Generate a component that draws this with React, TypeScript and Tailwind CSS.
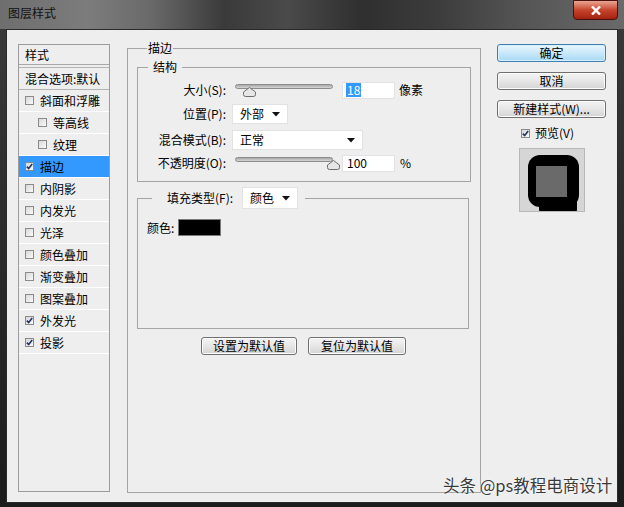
import React from 'react';

const FONT = { fontFamily: '"Noto Sans CJK SC", "Noto Sans", sans-serif' };

const Box = ({ checked }: { checked?: boolean }) => (
  <span className="w-[9px] h-[9px] shrink-0 border border-[#8a8a8a] bg-gradient-to-br from-[#d8d8d8] to-[#fafafa] flex items-center justify-center">
    {checked && (
      <svg width="7" height="7" viewBox="0 0 7 7">
        <path d="M0.8 3.6 L2.7 5.6 L6.2 0.9" fill="none" stroke="#27346b" strokeWidth="1.6" />
      </svg>
    )}
  </span>
);

const effects: { label: string; checked?: boolean; indent?: boolean; active?: boolean }[] = [
  { label: '斜面和浮雕' },
  { label: '等高线', indent: true },
  { label: '纹理', indent: true },
  { label: '描边', checked: true, active: true },
  { label: '内阴影' },
  { label: '内发光' },
  { label: '光泽' },
  { label: '颜色叠加' },
  { label: '渐变叠加' },
  { label: '图案叠加' },
  { label: '外发光', checked: true },
  { label: '投影', checked: true },
];

const Thumb = () => (
  <svg width="13" height="10" viewBox="0 0 13 10">
    <path d="M6.5 0.5 L12.5 5 L12.5 7.5 Q12.5 9.5 10.5 9.5 L2.5 9.5 Q0.5 9.5 0.5 7.5 L0.5 5 Z" fill="#e6e6e6" stroke="#6d6d6d" />
  </svg>
);

const Slider = ({ at }: { at: number }) => (
  <div className="relative w-[98px] h-[18px]">
    <div className="absolute left-0 right-0 top-[3px] h-[5px] rounded-full border border-[#8c8c8c] bg-gradient-to-b from-[#a8a8a8] to-[#d6d6d6]" />
    <div className="absolute top-[6px]" style={{ left: at }}>
      <Thumb />
    </div>
  </div>
);

const Arrow = () => (
  <svg width="8" height="5" viewBox="0 0 8 5">
    <path d="M0 0 L8 0 L4 4.5 Z" fill="#111" />
  </svg>
);

const Select = ({ w, h, text }: { w: string; h: string; text: string }) => (
  <div className={`${w} ${h} bg-white border border-[#e2e2e2] flex items-center justify-between pl-[7px] pr-[7px] text-[12px] text-black`}>
    <span>{text}</span>
    <Arrow />
  </div>
);

const Btn = ({ children, primary, w }: { children: React.ReactNode; primary?: boolean; w: string }) => (
  <div
    className={`${w} h-[18px] rounded-[3px] border flex items-center justify-center text-[12px] leading-none text-black ${
      primary
        ? 'border-[#3c7fb1] bg-gradient-to-b from-[#eaf6fd] to-[#a7d9f5] shadow-[inset_0_0_0_1px_#d8f0fc]'
        : 'border-[#707070] bg-gradient-to-b from-[#f4f4f4] via-[#e6e6e6] to-[#d4d4d4] shadow-[inset_0_0_0_1px_#fbfbfb]'
    }`}
  >
    {children}
  </div>
);

export default function App() {
  return (
    <div style={FONT} className="relative w-[624px] h-[507px] overflow-hidden flex flex-col bg-gradient-to-b from-[#3a3a3a] to-[#1c1c1c]">
      {/* title bar */}
      <div className="h-[29px] shrink-0 flex items-start bg-[linear-gradient(90deg,#6e6e6e_0%,#7c7c7c_14%,#6a6a6a_24%,#3a3a3a_36%,#4a4a4a_46%,#2f2f2f_58%,#3c3c3c_70%,#555_84%,#6a6a6a_100%)]">
        <div className="pl-[8px] pt-[5px] text-[12px] leading-[16px] text-[#111]">图层样式</div>
        <div className="ml-auto mr-[6px] w-[45px] h-[20px] rounded-b-[4px] border border-[#4a1010] bg-gradient-to-b from-[#e8a493] via-[#c7442c] to-[#a3210f] flex items-center justify-center">
          <svg width="10" height="9" viewBox="0 0 10 9">
            <path d="M1 0.5 L9 8.5 M9 0.5 L1 8.5" stroke="#fff" strokeWidth="2.4" />
          </svg>
        </div>
      </div>

      {/* body */}
      <div className="mx-[6px] mb-[4px] flex-1 border border-[#2a2a2a] bg-[#eeeeee] flex items-start pl-[11px] text-[12px] text-black">
        {/* effects list */}
        <div className="mt-[14px] w-[92px] h-[448px] border border-[#9c9c9c] flex flex-col">
          <div className="h-[20px] shrink-0 border-b border-[#a8a8a8] pl-[6px] flex items-center leading-none">样式</div>
          <div className="mt-[2px] h-[23px] shrink-0 border-t border-b border-[#b4b4b4] pl-[6px] flex items-center whitespace-nowrap overflow-hidden leading-none">
            混合选项:默认
          </div>
          {effects.map((e) => (
            <div
              key={e.label}
              className={`h-[22px] shrink-0 border-b border-white flex items-center gap-[6px] leading-none ${
                e.indent ? 'pl-[19px]' : 'pl-[6px]'
              } ${e.active ? 'bg-[#3399ff]' : ''}`}
            >
              <Box checked={e.checked} />
              <span>{e.label}</span>
            </div>
          ))}
        </div>

        {/* stroke group */}
        <fieldset className="ml-[17px] mt-[10px] w-[354px] h-[453px] border border-[#a4a4a4] p-0 m-0 min-w-0">
          <legend className="ml-[19px] px-[1px] h-[16px] leading-[16px]">描边</legend>
          <div className="pl-[9px] flex flex-col">
            <fieldset className="mt-[3px] w-[334px] border border-[#a4a4a4] p-0 m-0 min-w-0">
              <legend className="ml-[10px] px-[5px] h-[16px] leading-[16px]">结构</legend>
              <div className="pt-[6px] pb-[9px] flex flex-col">
                <div className="h-[18px] flex items-center">
                  <div className="w-[88px] text-right leading-none">大小(S):</div>
                  <div className="ml-[9px]">
                    <Slider at={8} />
                  </div>
                  <div className="ml-[9px] w-[53px] h-[17px] bg-white border border-[#e2e2e2] flex items-center pl-[3px]">
                    <span className="bg-[#3399ff] text-white leading-[14px] px-[1px]">18</span>
                  </div>
                  <span className="ml-[4px] leading-none">像素</span>
                </div>
                <div className="mt-[5px] h-[20px] flex items-center">
                  <div className="w-[88px] text-right leading-none">位置(P):</div>
                  <div className="ml-[6px]">
                    <Select w="w-[56px]" h="h-[20px]" text="外部" />
                  </div>
                </div>
                <div className="mt-[6px] h-[20px] flex items-center">
                  <div className="w-[88px] text-right leading-none">混合模式(B):</div>
                  <div className="ml-[6px]">
                    <Select w="w-[131px]" h="h-[20px]" text="正常" />
                  </div>
                </div>
                <div className="mt-[4px] h-[18px] flex items-center">
                  <div className="w-[88px] text-right leading-none">不透明度(O):</div>
                  <div className="ml-[9px]">
                    <Slider at={92} />
                  </div>
                  <div className="ml-[9px] w-[53px] h-[17px] bg-white border border-[#e2e2e2] flex items-center pl-[4px] leading-none">
                    100
                  </div>
                  <span className="ml-[5px] leading-none">%</span>
                </div>
              </div>
            </fieldset>

            <fieldset className="mt-[5px] w-[332px] h-[142px] border border-[#a4a4a4] p-0 m-0 min-w-0">
              <legend className="ml-[14px] pl-[15px] pr-[7px] h-[22px] flex items-center">
                <span className="w-[75px] leading-none">填充类型(F):</span>
                <Select w="w-[56px]" h="h-[22px]" text="颜色" />
              </legend>
              <div className="pl-[9px] pt-[10px] flex items-center">
                <span className="w-[31px] leading-none">颜色:</span>
                <div className="w-[43px] h-[17px] bg-black border border-[#7a7a7a]" />
              </div>
            </fieldset>

            <div className="mt-[8px] pl-[64px] flex gap-[11px]">
              <Btn w="w-[96px]">设置为默认值</Btn>
              <Btn w="w-[98px]">复位为默认值</Btn>
            </div>
          </div>
        </fieldset>

        {/* right column */}
        <div className="ml-[16px] mt-[14px] w-[109px] flex flex-col">
          <Btn primary w="w-[109px]">确定</Btn>
          <div className="mt-[10px]">
            <Btn w="w-[109px]">取消</Btn>
          </div>
          <div className="mt-[10px]">
            <Btn w="w-[109px]">新建样式(W)...</Btn>
          </div>
          <div className="mt-[8px] h-[14px] pl-[24px] flex items-center gap-[5px]">
            <Box checked />
            <span className="leading-none">预览(V)</span>
          </div>
          <div className="mt-[8px] ml-[22px] w-[66px] h-[64px] border border-[#b8b8b8] bg-[#d6d6d6] overflow-hidden">
            <svg width="64" height="62" viewBox="0 0 64 62">
              <rect x="8" y="6" width="51" height="52" rx="12" fill="#000" />
              <rect x="19" y="28" width="38" height="40" rx="8" fill="#000" />
              <rect x="16" y="17" width="31" height="31" fill="#6a6a6a" />
            </svg>
          </div>
        </div>
      </div>

      {/* watermark */}
      <div className="absolute left-[443px] top-[475px] text-[16.5px] leading-[20px] text-[#3a3a3a] whitespace-nowrap [text-shadow:0_0_2px_#fff,0_0_1px_#fff]">
        头条 @ps教程电商设计
      </div>
    </div>
  );
}
